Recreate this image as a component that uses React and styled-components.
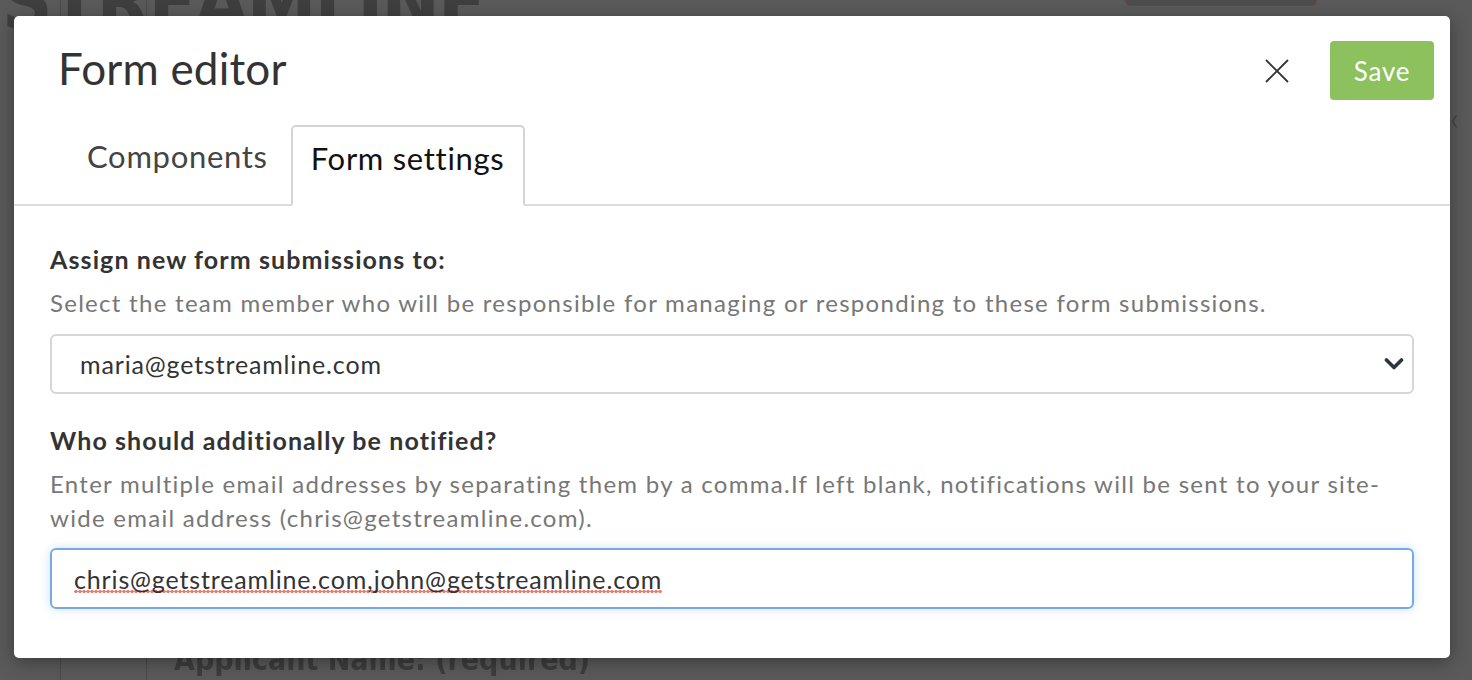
import React from "react";
import styled, { createGlobalStyle } from "styled-components";

const Global = createGlobalStyle`
  html, body { margin: 0; padding: 0; }
  body {
    background: #5a5a5a;
    font-family: Lato, "Open Sans", sans-serif;
    -webkit-font-smoothing: antialiased;
  }
`;

const FONT = `Lato, "Open Sans", "Liberation Sans", sans-serif`;

const Page = styled.div`
  position: relative;
  width: 1472px;
  height: 680px;
  overflow: hidden;
  background: #5a5a5a;
  padding: 16px 0 0 14px;
  box-sizing: border-box;
`;

/* faint page behind the overlay */
const BehindLogo = styled.div`
  position: absolute;
  left: 2px;
  top: -18px;
  height: 40px;
  line-height: 40px;
  font-family: "Liberation Sans Narrow", "DejaVu Sans Condensed", sans-serif;
  font-weight: 700;
  font-size: 78px;
  letter-spacing: -2px;
  color: #3f3f3f;
  filter: blur(0.6px);
`;

const BehindButton = styled.div`
  position: absolute;
  left: 1125px;
  top: -10px;
  width: 190px;
  height: 14px;
  border-radius: 6px;
  border: 1px dotted #8a3a3a;
  background: #4d4d4d;
`;

const BehindTitle = styled.div`
  position: absolute;
  left: 174px;
  top: 640px;
  line-height: 40px;
  font-family: "Liberation Sans Narrow", "DejaVu Sans Condensed", sans-serif;
  font-weight: 700;
  font-size: 30px;
  color: #3d3d3d;
  filter: blur(0.4px);
`;

const BehindColumn = styled.div`
  position: absolute;
  left: ${(p) => p.$left}px;
  top: 0;
  bottom: 0;
  width: 1px;
  background: #4a4a4a;
`;

const BehindChevron = styled.div`
  position: absolute;
  left: 1450px;
  top: 96px;
  color: #3f3f3f;
  font-family: ${FONT};
  font-weight: 300;
  font-size: 34px;
`;

const Modal = styled.div`
  position: relative;
  width: 1436px;
  height: 642px;
  background: #fff;
  border-radius: 5px;
  box-shadow: 0 4px 18px rgba(0, 0, 0, 0.35);
  display: flex;
  flex-direction: column;
  font-family: ${FONT};
  color: #333;
`;

const Header = styled.header`
  height: 109px;
  display: flex;
  align-items: center;
  padding: 0 16px 0 44px;
  box-sizing: border-box;
`;

const Title = styled.h1`
  margin: 0 0 6px;
  flex: 1;
  font-weight: 400;
  font-size: 44px;
  line-height: 54px;
  color: #333;
  letter-spacing: 0.2px;
`;

const CloseButton = styled.button`
  width: 24px;
  height: 24px;
  padding: 0;
  border: 0;
  background: none;
  margin-right: 41px;
  display: flex;
  align-items: center;
  justify-content: center;
  cursor: pointer;
`;

const SaveButton = styled.button`
  width: 104px;
  height: 59px;
  border: 0;
  border-radius: 4px;
  background: #8cc15d;
  color: #fff;
  font-family: ${FONT};
  font-size: 26px;
  letter-spacing: 0.8px;
`;

const Tabs = styled.nav`
  display: flex;
  align-items: flex-end;
  height: 79px;
  padding-left: 53px;
  border-bottom: 2px solid #dcdcdc;
`;

const Tab = styled.div`
  height: ${(p) => (p.$active ? "81px" : "79px")};
  margin-bottom: ${(p) => (p.$active ? "-2px" : "0")};
  margin-right: 3px;
  padding: 0 18px ${(p) => (p.$active ? "15px" : "17px")};
  box-sizing: border-box;
  display: flex;
  align-items: center;
  font-size: 31px;
  letter-spacing: 0.7px;
  color: ${(p) => (p.$active ? "#111" : "#444")};
  background: #fff;
  border: 2px solid ${(p) => (p.$active ? "#d4d4d4" : "transparent")};
  border-bottom-color: ${(p) => (p.$active ? "#fff" : "transparent")};
  border-radius: 5px 5px 0 0;
`;

const Body = styled.div`
  padding: 38px 36px 0 36px;
  display: flex;
  flex-direction: column;
`;

const Label = styled.label`
  display: block;
  font-weight: 700;
  font-size: 25px;
  line-height: 30px;
  color: #333;
  letter-spacing: 1.1px;
  margin-top: ${(p) => p.$mt || 0}px;
`;

const Help = styled.p`
  margin: 12px 0 0;
  font-size: 24px;
  line-height: 34px;
  color: #777;
  letter-spacing: 1.28px;
`;

const Field = styled.div`
  margin-top: ${(p) => p.$mt}px;
  height: ${(p) => p.$h}px;
  box-sizing: border-box;
  border: 2px solid ${(p) => (p.$focus ? "#75aae6" : "#d6d6d6")};
  border-radius: 6px;
  box-shadow: ${(p) => (p.$focus ? "0 0 10px rgba(102, 168, 235, 0.35)" : "none")};
  display: flex;
  align-items: center;
  padding: 0 ${(p) => p.$pr}px 0 ${(p) => p.$pl}px;
  font-size: 25px;
  color: #333;
  letter-spacing: 0.85px;
`;

const FieldValue = styled.span`
  flex: 1;
  white-space: nowrap;
`;

const Misspelled = styled.span`
  padding-bottom: 0;
  background-image: radial-gradient(circle, #ec7b72 1.5px, transparent 1.9px);
  background-repeat: repeat-x;
  background-size: 4px 5px;
  background-position: 0 100%;
`;

const Chevron = () => (
  <svg width="20" height="14" viewBox="0 0 20 14" aria-hidden="true">
    <path d="M2.5 3 L10 10.5 L17.5 3" fill="none" stroke="#2b3640" strokeWidth="3.6" strokeLinecap="round" strokeLinejoin="round" />
  </svg>
);

const CloseIcon = () => (
  <svg width="24" height="24" viewBox="0 0 24 24" aria-hidden="true">
    <path d="M1 1 L23 23 M23 1 L1 23" stroke="#333" strokeWidth="1.8" fill="none" />
  </svg>
);

export default function App() {
  return (
    <>
      <Global />
      <Page>
        <BehindLogo>STREAMLINE</BehindLogo>
        <BehindButton />
        <BehindColumn $left={60} />
        <BehindColumn $left={146} />
        <BehindTitle>Applicant Name: (required)</BehindTitle>
        <BehindChevron>‹</BehindChevron>
        <Modal role="dialog" aria-label="Form editor">
          <Header>
            <Title>Form editor</Title>
            <CloseButton aria-label="Close">
              <CloseIcon />
            </CloseButton>
            <SaveButton>Save</SaveButton>
          </Header>
          <Tabs>
            <Tab>Components</Tab>
            <Tab $active>Form settings</Tab>
          </Tabs>
          <Body>
            <Label>Assign new form submissions to:</Label>
            <Help>
              Select the team member who will be responsible for managing or responding to these form submissions.
            </Help>
            <Field $mt={14} $h={60} $pl={28} $pr={8}>
              <FieldValue>maria@getstreamline.com</FieldValue>
              <Chevron />
            </Field>
            <Label $mt={31}>Who should additionally be notified?</Label>
            <Help>
              Enter multiple email addresses by separating them by a comma.If left blank, notifications will be sent to your site-wide email address (chris@getstreamline.com).
            </Help>
            <Field $mt={13} $h={61} $pl={22} $pr={22} $focus>
              <FieldValue>
                <Misspelled>chris@getstreamline.com,john@getstreamline.com</Misspelled>
              </FieldValue>
            </Field>
          </Body>
        </Modal>
      </Page>
    </>
  );
}
